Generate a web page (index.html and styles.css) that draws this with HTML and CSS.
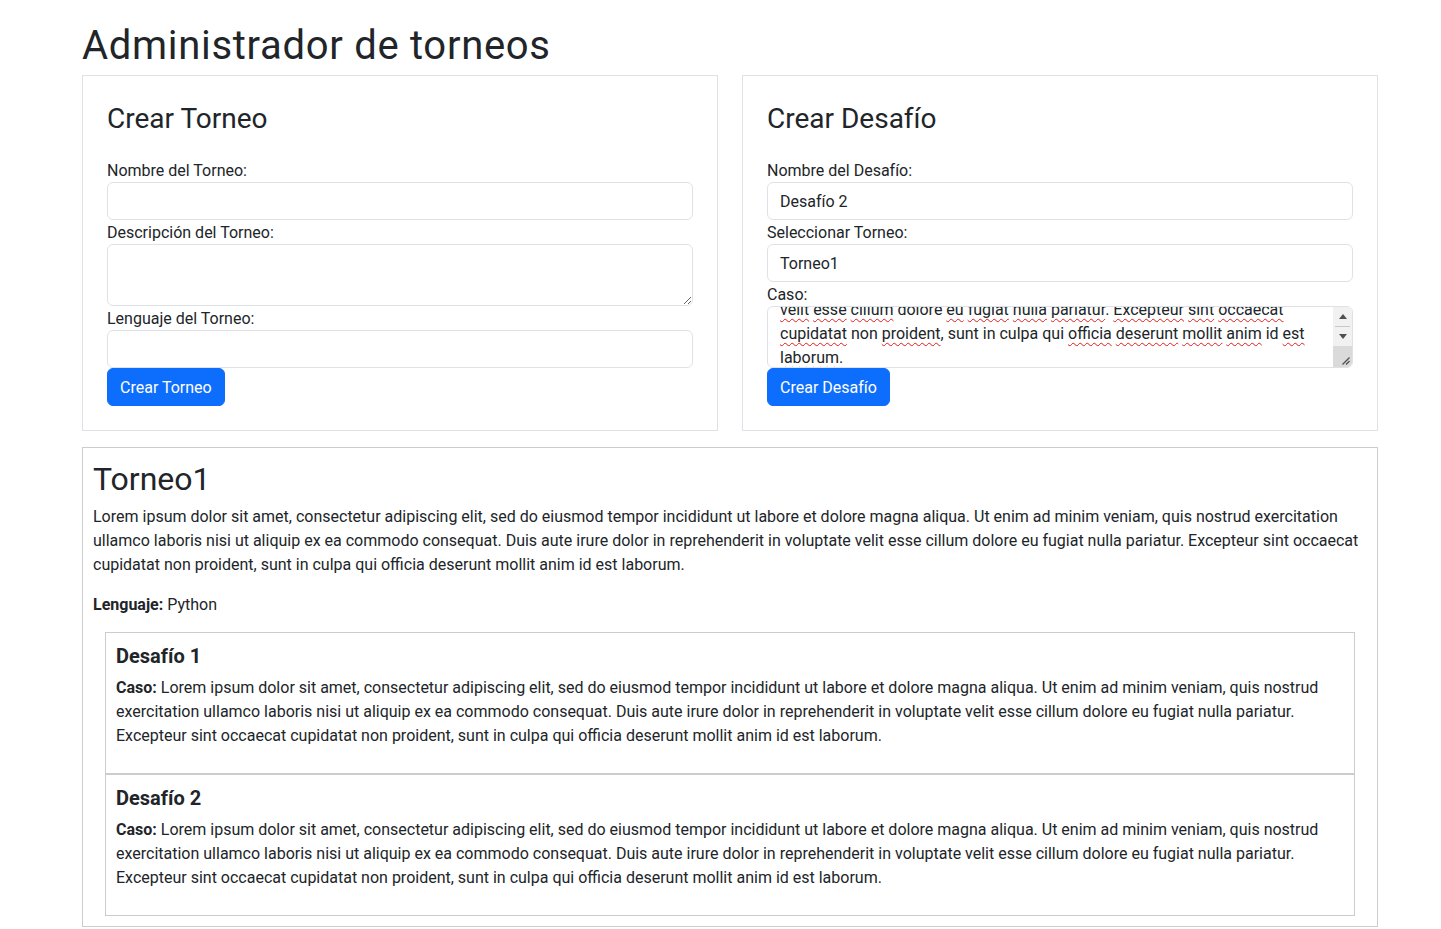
FILE: index.html
```html
<!DOCTYPE html>
<html lang="es">
<head>
<meta charset="utf-8">
<title>Administrador de torneos</title>
<link rel="stylesheet" href="styles.css">
</head>
<body>
<div class="page">
  <h1 class="title">Administrador de torneos</h1>

  <div class="forms">
    <form class="panel">
      <h3 class="panel-title">Crear Torneo</h3>
      <label class="label" for="nt">Nombre del Torneo:</label>
      <input class="control" id="nt" type="text">
      <label class="label" for="dt">Descripción del Torneo:</label>
      <textarea class="control area" id="dt" rows="2"></textarea>
      <label class="label" for="lt">Lenguaje del Torneo:</label>
      <input class="control" id="lt" type="text">
      <button class="btn" type="button">Crear Torneo</button>
    </form>

    <form class="panel">
      <h3 class="panel-title">Crear Desafío</h3>
      <label class="label">Nombre del Desafío:</label>
      <div class="control">Desafío 2</div>
      <label class="label">Seleccionar Torneo:</label>
      <div class="control">Torneo1</div>
      <label class="label">Caso:</label>
      <div class="control fake-area">
        <div class="fake-text">
          <span class="line"><span class="sp">velit</span> <span class="sp">esse</span> <span class="sp">cillum</span> dolore <span class="sp">eu</span> <span class="sp">fugiat</span> <span class="sp">nulla</span> <span class="sp">pariatur</span>. <span class="sp">Excepteur</span> <span class="sp">sint</span> <span class="sp">occaecat</span></span>
          <span class="line"><span class="sp">cupidatat</span> non <span class="sp">proident</span>, sunt in culpa qui <span class="sp">officia</span> <span class="sp">deserunt</span> <span class="sp">mollit</span> <span class="sp">anim</span> id <span class="sp">est</span></span>
          <span class="line"><span class="sp">laborum</span>.</span>
        </div>
        <div class="vscroll">
          <span class="arrow"><span class="tri up"></span></span>
          <span class="sep"></span>
          <span class="arrow"><span class="tri down"></span></span>
          <span class="corner">
            <svg class="grip" width="10" height="10" viewBox="0 0 10 10"><path d="M9.5 2.5L2.5 9.5M9.5 6L6 9.5" stroke="#505050" stroke-width="1.3" fill="none"/></svg>
          </span>
        </div>
      </div>
      <button class="btn" type="button">Crear Desafío</button>
    </form>
  </div>

  <section class="torneo">
    <h2 class="torneo-title">Torneo1</h2>
    <p class="text">Lorem ipsum dolor sit amet, consectetur adipiscing elit, sed do eiusmod tempor incididunt ut labore et dolore magna aliqua. Ut enim ad minim veniam, quis nostrud exercitation ullamco laboris nisi ut aliquip ex ea commodo consequat. Duis aute irure dolor in reprehenderit in voluptate velit esse cillum dolore eu fugiat nulla pariatur. Excepteur sint occaecat cupidatat non proident, sunt in culpa qui officia deserunt mollit anim id est laborum.</p>
    <p class="text"><strong>Lenguaje:</strong> Python</p>
    <div class="desafios">
      <div class="desafio">
        <h5 class="desafio-title">Desafío 1</h5>
        <p class="text"><strong>Caso:</strong> Lorem ipsum dolor sit amet, consectetur adipiscing elit, sed do eiusmod tempor incididunt ut labore et dolore magna aliqua. Ut enim ad minim veniam, quis nostrud exercitation ullamco laboris nisi ut aliquip ex ea commodo consequat. Duis aute irure dolor in reprehenderit in voluptate velit esse cillum dolore eu fugiat nulla pariatur. Excepteur sint occaecat cupidatat non proident, sunt in culpa qui officia deserunt mollit anim id est laborum.</p>
      </div>
      <div class="desafio">
        <h5 class="desafio-title">Desafío 2</h5>
        <p class="text"><strong>Caso:</strong> Lorem ipsum dolor sit amet, consectetur adipiscing elit, sed do eiusmod tempor incididunt ut labore et dolore magna aliqua. Ut enim ad minim veniam, quis nostrud exercitation ullamco laboris nisi ut aliquip ex ea commodo consequat. Duis aute irure dolor in reprehenderit in voluptate velit esse cillum dolore eu fugiat nulla pariatur. Excepteur sint occaecat cupidatat non proident, sunt in culpa qui officia deserunt mollit anim id est laborum.</p>
      </div>
    </div>
  </section>
</div>
</body>
</html>
```
FILE: styles.css
```css
*,
*::before,
*::after {
  box-sizing: border-box;
}

body {
  margin: 0;
  font-family: Roboto, "Liberation Sans", sans-serif;
  font-size: 16px;
  line-height: 1.5;
  color: #212529;
  background: #fff;
}

.page {
  width: 1296px;
  margin-left: 82px;
  padding-top: 21px;
}

.title {
  margin: 0 0 6px;
  padding-top: 1px;
  height: 48px;
  font-size: 40px;
  font-weight: 400;
  line-height: 48px;
  letter-spacing: 0.7px;
}

.forms {
  display: flex;
  gap: 24px;
}

.panel {
  flex: 1 1 0;
  margin: 0;
  padding: 24px;
  border: 1px solid #dee2e6;
}

.panel-title {
  margin: 2px 0 22px;
  font-size: 28px;
  font-weight: 400;
  line-height: 33.6px;
}

.label {
  display: block;
  height: 24px;
  padding-top: 1px;
}

.control {
  display: block;
  width: 100%;
  height: 38px;
  padding: 7px 12px 5px;
  border: 1px solid #dee2e6;
  border-radius: 6px;
  background: #fff;
  color: #212529;
  font: inherit;
  line-height: 24px;
  outline: none;
}

.area {
  height: 62px;
  resize: vertical;
}

.fake-area {
  display: flex;
  height: 62px;
  padding: 0;
  overflow: hidden;
}

.fake-text {
  flex: 1 1 auto;
  display: flex;
  flex-direction: column;
  justify-content: flex-end;
  margin-bottom: -3px;
  padding: 0 12px;
  overflow: hidden;
}

.line {
  display: block;
  flex: 0 0 auto;
  white-space: nowrap;
}

.sp {
  text-decoration: underline wavy #e51c1c;
  text-decoration-thickness: 1px;
  text-underline-offset: 3px;
  text-decoration-skip-ink: none;
}

.vscroll {
  flex: 0 0 19px;
  display: flex;
  flex-direction: column;
  background: #f1f1f1;
}

.arrow {
  display: flex;
  align-items: center;
  justify-content: center;
  height: 19px;
}

.tri {
  width: 0;
  height: 0;
  border-left: 4.5px solid transparent;
  border-right: 4.5px solid transparent;
}

.tri.up {
  border-bottom: 5px solid #505050;
}

.tri.down {
  border-top: 5px solid #505050;
}

.sep {
  height: 1px;
  margin: 0 2px;
  background: #c8c8c8;
}

.corner {
  position: relative;
  flex: 1 1 auto;
  background: #dadada;
}

.grip {
  position: absolute;
  right: 2px;
  bottom: 2px;
}

.btn {
  display: inline-block;
  height: 38px;
  padding: 7px 12px 5px;
  border: 1px solid #0d6efd;
  border-radius: 6px;
  background: #0d6efd;
  color: #fff;
  font: inherit;
  line-height: 24px;
  cursor: pointer;
}

.torneo {
  margin-top: 16px;
  padding: 10px;
  border: 1px solid #cccccc;
}

.torneo-title {
  margin: 0 0 6px;
  padding-top: 2px;
  font-size: 32px;
  font-weight: 400;
  line-height: 38.4px;
}

.text {
  margin: 0 0 15px;
  padding-top: 1px;
}

.text strong {
  font-weight: 700;
}

.desafios {
  margin: 0 12px;
}

.desafio {
  padding: 10px;
  border: 1px solid #cccccc;
}

.desafio-title {
  margin: 0 0 7px;
  padding-top: 1px;
  font-size: 20px;
  font-weight: 700;
  line-height: 24px;
}
```
